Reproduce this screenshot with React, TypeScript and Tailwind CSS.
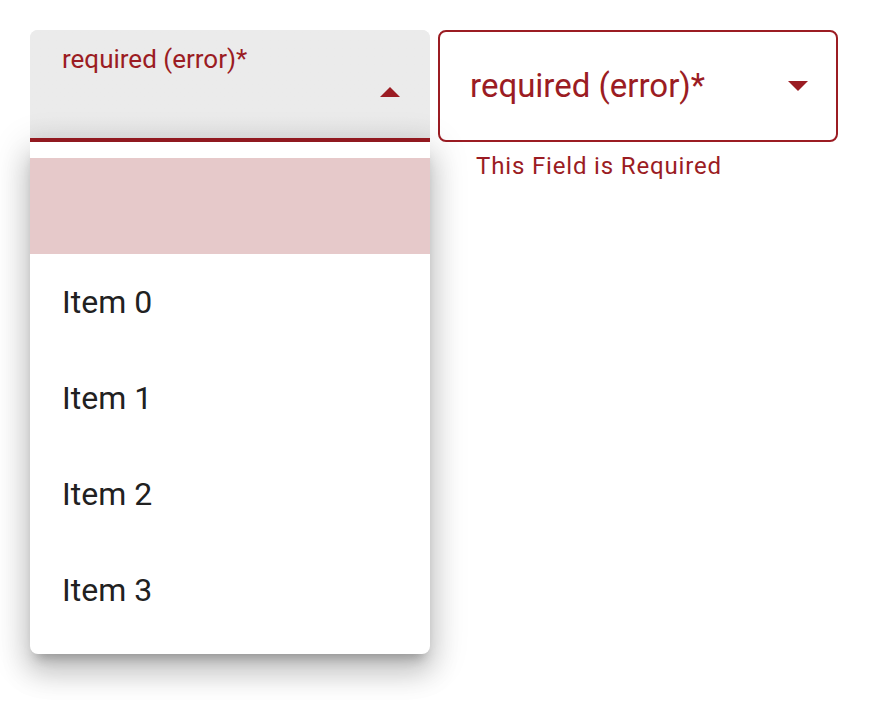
const red = "text-[#9b1c23]";

function CaretUp() {
  return (
    <svg width="20" height="10" viewBox="0 0 20 10" className="fill-[#9b1c23]">
      <path d="M0 10 L10 0 L20 10 Z" />
    </svg>
  );
}

function CaretDown() {
  return (
    <svg width="20" height="10" viewBox="0 0 20 10" className="fill-[#9b1c23]">
      <path d="M0 0 L20 0 L10 10 Z" />
    </svg>
  );
}

const items = ["Item 0", "Item 1", "Item 2", "Item 3"];

export default function App() {
  return (
    <div className="min-h-[722px] bg-white pl-[30px] pt-[30px] font-['Roboto',sans-serif]">
      <div className="flex items-start gap-2">
        {/* filled select, open */}
        <div className="relative w-[400px]">
          <div className="h-[112px] rounded-t-lg border-b-4 border-[#9b1c23] bg-[#ebebeb] bg-linear-to-b from-[#ebebeb] from-80% to-[#e4e4e4]">
            <div className={`pl-8 pt-[13px] text-[26px] leading-[32px] ${red}`}>required (error)*</div>
            <div className="flex justify-end pr-[30px] pt-[12px]">
              <CaretUp />
            </div>
          </div>
          <div className="absolute left-0 top-full w-[400px] rounded-b-lg bg-white py-4 shadow-[0_10px_12px_-6px_rgba(0,0,0,0.25),0_18px_28px_2px_rgba(0,0,0,0.16),0_8px_36px_6px_rgba(0,0,0,0.12)]">
            <div className="h-24 bg-[#e6c9ca]" />
            {items.map((it) => (
              <div key={it} className="flex h-24 items-center pl-8 text-[32px] text-[#212121]">
                {it}
              </div>
            ))}
          </div>
        </div>

        {/* outlined select */}
        <div className="w-[400px]">
          <div className="flex h-[112px] items-center justify-between rounded-lg border-2 border-[#9b1c23] pl-[30px] pr-[28px]">
            <span className={`text-[33px] ${red}`}>required (error)*</span>
            <CaretDown />
          </div>
          <div className={`pl-[38px] pt-[6px] text-[24px] tracking-[0.035em] ${red}`}>This Field is Required</div>
        </div>
      </div>
    </div>
  );
}
